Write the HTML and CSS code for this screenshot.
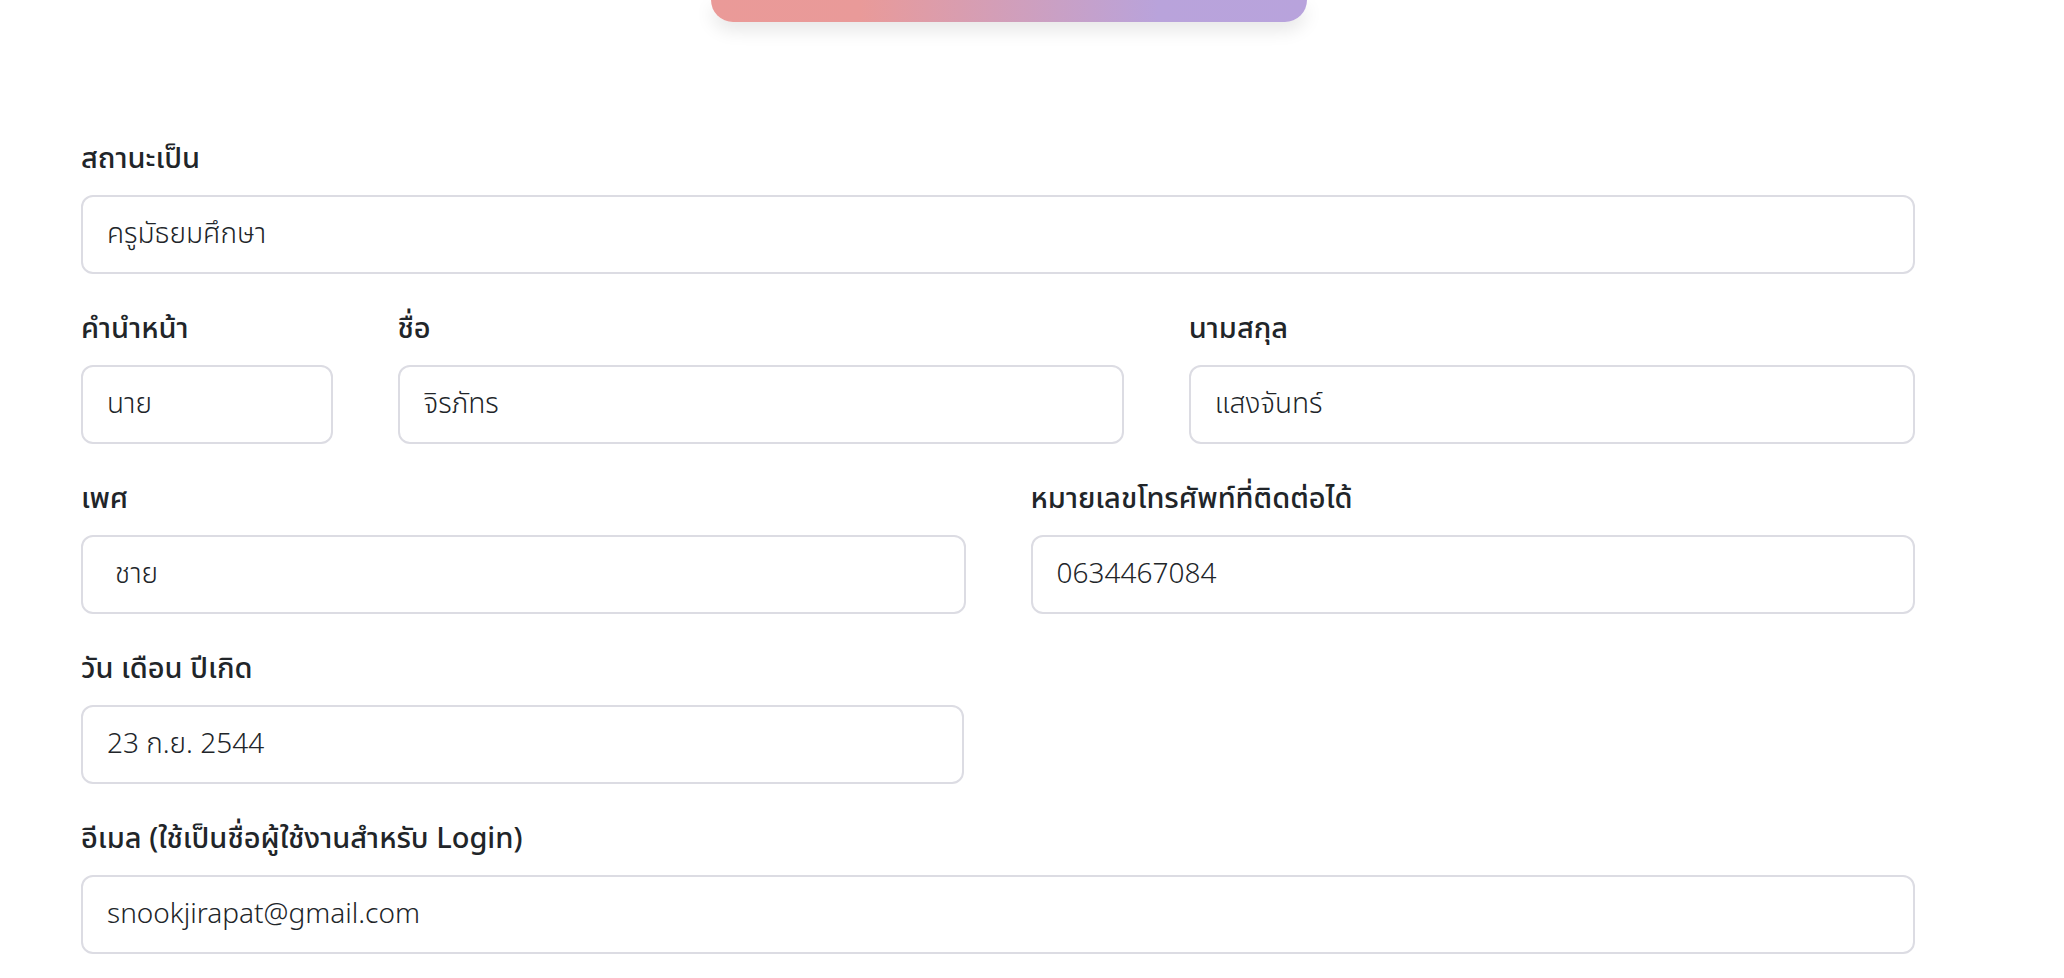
FILE: index.html
```html
<!DOCTYPE html>
<html lang="th">
<head>
  <meta charset="UTF-8" />
  <title>แก้ไขข้อมูลส่วนตัว</title>
  <link rel="stylesheet" href="styles.css">
</head>
<body>
  <div class="hero-wrap">
    <div class="hero"></div>
  </div>

  <form class="profile-form">
    <div class="field span-12">
      <label for="role">สถานะเป็น</label>
      <input type="text" id="role" value="ครูมัธยมศึกษา" />
    </div>

    <div class="field span-2">
      <label for="prefix">คำนำหน้า</label>
      <input type="text" id="prefix" value="นาย" />
    </div>
    <div class="field span-5">
      <label for="firstname">ชื่อ</label>
      <input type="text" id="firstname" value="จิรภัทร" />
    </div>
    <div class="field span-5">
      <label for="lastname">นามสกุล</label>
      <input type="text" id="lastname" value="แสงจันทร์" />
    </div>

    <div class="field span-6">
      <label for="gender">เพศ</label>
      <select id="gender">
        <option selected>ชาย</option>
        <option>หญิง</option>
      </select>
    </div>
    <div class="field span-6">
      <label for="phone">หมายเลขโทรศัพท์ที่ติดต่อได้</label>
      <input type="text" id="phone" value="0634467084" />
    </div>

    <div class="field span-6 date">
      <label for="birthday">วัน เดือน ปีเกิด</label>
      <input type="text" id="birthday" value="23 ก.ย. 2544" />
    </div>

    <div class="field span-12">
      <label for="email">อีเมล (ใช้เป็นชื่อผู้ใช้งานสำหรับ Login)</label>
      <input type="text" id="email" value="snookjirapat@gmail.com" />
    </div>
  </form>
</body>
</html>
```

FILE: styles.css
```css
body {
  margin: 0;
  padding: 0 149px 0 81px;
  font-family: "Noto Sans Thai", "Noto Sans", sans-serif;
  color: #212529;
  background: #fff;
}

.hero-wrap { padding-left: 630px; }
.hero {
  width: 596px;
  height: 22px;
  border-radius: 0 0 40px 40px;
  background: linear-gradient(90deg, #ea9a98 0%, #e99a99 25%, #b9a3db 75%, #b8a3dc 100%);
  box-shadow: 0 8px 18px rgba(0, 0, 0, 0.10);
}

.profile-form {
  margin-top: 114px;
  display: grid;
  grid-template-columns: repeat(12, 1fr);
  column-gap: 65px;
  row-gap: 32px;
}

.span-2 { grid-column: span 2; }
.span-5 { grid-column: span 5; }
.span-6 { grid-column: span 6; }
.span-12 { grid-column: span 12; }

.field label {
  display: block;
  font-size: 29px;
  font-weight: 500;
  line-height: 40px;
  padding-top: 3px;
  margin-bottom: 16px;
}

.field input, .field select {
  display: block;
  width: 100%;
  height: 79px;
  box-sizing: border-box;
  padding: 0 24px;
  border: 2px solid #dcdce3;
  border-radius: 12px;
  background: #fff;
  font-family: inherit;
  font-size: 28px;
  font-weight: 300;
  color: #212529;
  outline: none;
}

.field select {
  padding-left: 32px;
  -webkit-appearance: none;
  appearance: none;
}

.date input { width: calc(100% - 2px); }
```
